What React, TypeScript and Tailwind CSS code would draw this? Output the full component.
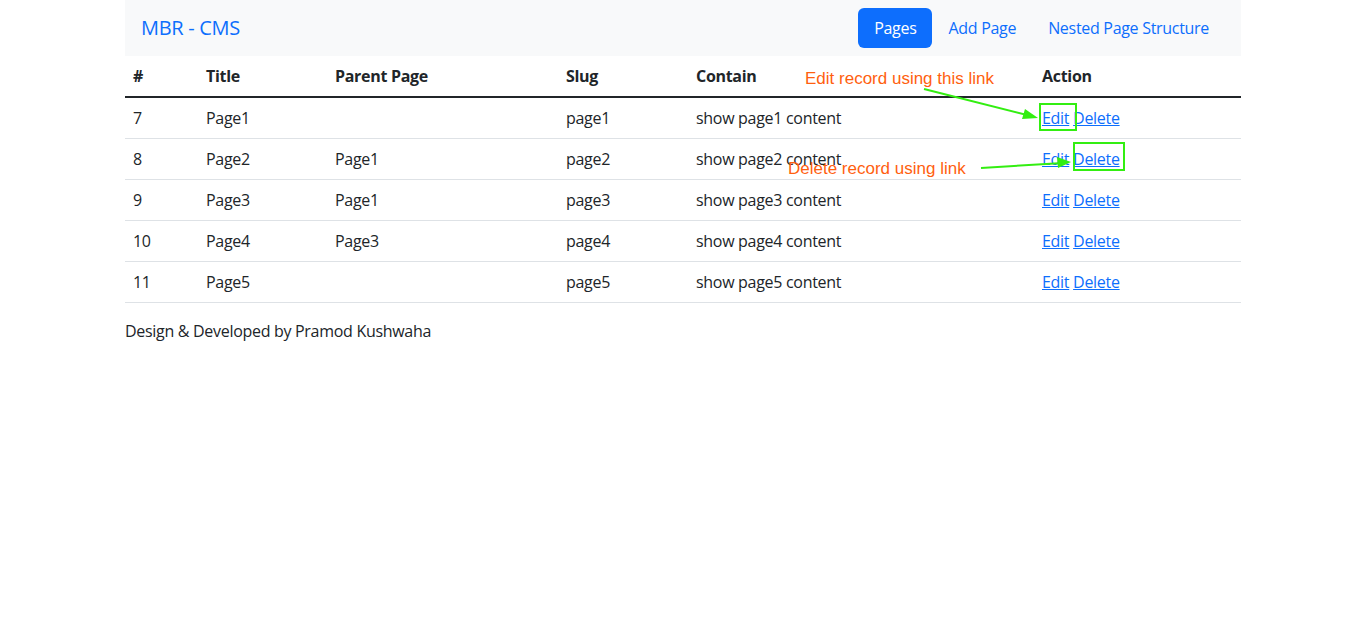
import React from "react";

type Row = { id: number; title: string; parent: string; slug: string; contain: string };

const rows: Row[] = [
    { id: 7, title: "Page1", parent: "", slug: "page1", contain: "show page1 content" },
    { id: 8, title: "Page2", parent: "Page1", slug: "page2", contain: "show page2 content" },
    { id: 9, title: "Page3", parent: "Page1", slug: "page3", contain: "show page3 content" },
    { id: 10, title: "Page4", parent: "Page3", slug: "page4", contain: "show page4 content" },
    { id: 11, title: "Page5", parent: "", slug: "page5", contain: "show page5 content" },
];

export default function App() {
    return (
        <div className="min-h-[636px] bg-white text-[#212529] text-base leading-6 tracking-[-0.3px] font-['Open_Sans',sans-serif]">
            <div className="relative mx-auto w-[1116px]">
                {/* Navbar */}
                <nav className="flex h-14 items-center justify-between bg-[#f8f9fa] px-4 py-2">
                    <a href="#" className="py-[5px] text-xl leading-[30px] text-[#0d6efd]">MBR - CMS</a>
                    <ul className="flex list-none">
                        <li>
                            <a href="#" className="block rounded-md bg-[#0d6efd] px-4 py-2 text-white">Pages</a>
                        </li>
                        <li>
                            <a href="#" className="block px-4 py-2 text-[#0d6efd]">Add Page</a>
                        </li>
                        <li>
                            <a href="#" className="block px-4 py-2 text-[#0d6efd]">Nested Page Structure</a>
                        </li>
                    </ul>
                </nav>

                {/* Table */}
                <table className="mb-4 w-full border-collapse text-left">
                    <thead>
                        <tr>
                            <th className="w-[73px] p-2 font-bold">#</th>
                            <th className="w-[129px] p-2 font-bold">Title</th>
                            <th className="w-[231px] p-2 font-bold">Parent Page</th>
                            <th className="w-[130px] p-2 font-bold">Slug</th>
                            <th className="w-[346px] p-2 font-bold">Contain</th>
                            <th className="p-2 font-bold">Action</th>
                        </tr>
                    </thead>
                    <tbody className="border-t-2 border-[#212529]">
                        {rows.map(r => (
                            <tr key={r.id} className="border-b border-[#dee2e6]">
                                <td className="p-2">{r.id}</td>
                                <td className="p-2">{r.title}</td>
                                <td className="p-2">{r.parent}</td>
                                <td className="p-2">{r.slug}</td>
                                <td className="p-2">{r.contain}</td>
                                <td className="p-2">
                                    <a href="#" className="text-[#0d6efd] underline">Edit</a>{" "}
                                    <a href="#" className="text-[#0d6efd] underline">Delete</a>
                                </td>
                            </tr>
                        ))}
                    </tbody>
                </table>

                {/* Footer */}
                <p>Design &amp; Developed by Pramod Kushwaha</p>

                {/* Annotations drawn over the screenshot */}
                <span className="absolute left-[680px] top-[69px] whitespace-nowrap text-[17px] leading-5 tracking-normal text-[#ff5f0f] font-['Liberation_Sans',sans-serif]">
                    Edit record using this link
                </span>
                <span className="absolute left-[663px] top-[159px] whitespace-nowrap text-[17px] leading-5 tracking-normal text-[#ff5f0f] font-['Liberation_Sans',sans-serif]">
                    Delete record using link
                </span>
                <svg className="pointer-events-none absolute left-0 top-0" width="1116" height="200" viewBox="0 0 1116 200">
                    <g stroke="#33ee11" strokeWidth="2" fill="none">
                        <rect x="915" y="104" width="36" height="26" />
                        <rect x="949" y="143" width="50" height="27" />
                        <line x1="799" y1="89" x2="906" y2="116" />
                        <line x1="856" y1="168" x2="938" y2="163" />
                    </g>
                    <g fill="#33ee11">
                        <polygon points="913,118 900,109 897,119" />
                        <polygon points="946,162 932,157 933,168" />
                    </g>
                </svg>
            </div>
        </div>
    );
}
